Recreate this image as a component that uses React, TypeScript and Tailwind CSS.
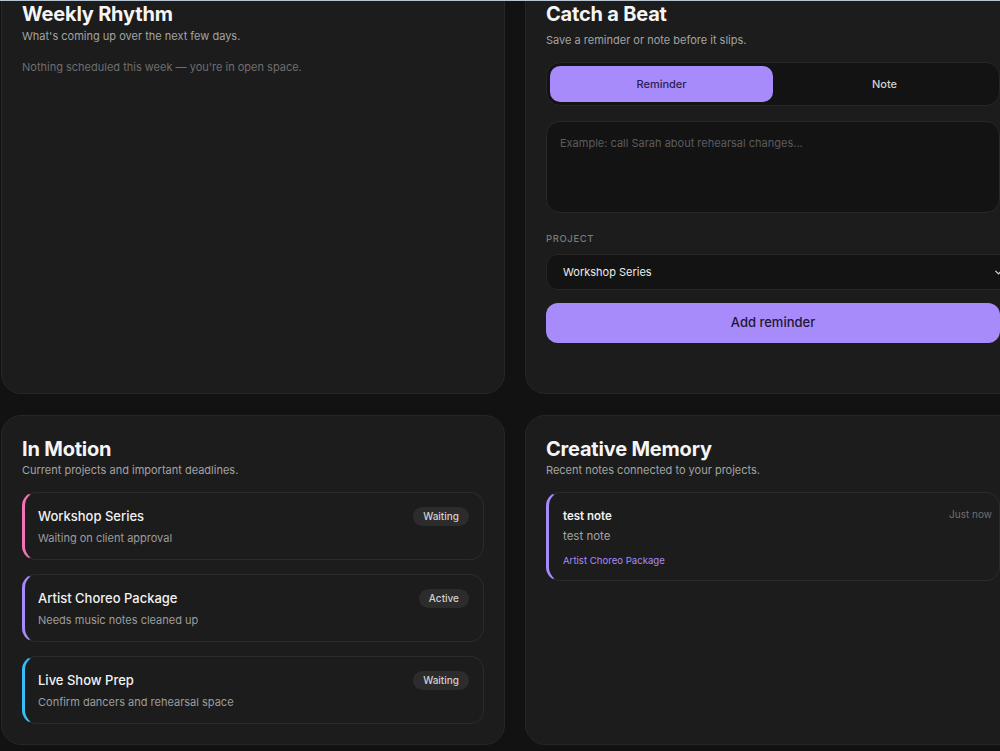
import { ChevronDown } from 'lucide-react';

interface Project {
    name: string;
    detail: string;
    status: string;
    accent: string;
}

const projects: Project[] = [
    {
        name: 'Workshop Series',
        detail: 'Waiting on client approval',
        status: 'Waiting',
        accent: 'border-l-[#f472b6]',
    },
    {
        name: 'Artist Choreo Package',
        detail: 'Needs music notes cleaned up',
        status: 'Active',
        accent: 'border-l-[#a78bfa]',
    },
    {
        name: 'Live Show Prep',
        detail: 'Confirm dancers and rehearsal space',
        status: 'Waiting',
        accent: 'border-l-[#38bdf8]',
    },
];

function Panel({ children, className = '' }: { children: React.ReactNode; className?: string }) {
    return (
        <section
            className={`rounded-[20px] border border-[#262626] bg-[#1c1c1c] px-5 pt-5 pb-5 ${className}`}
        >
            {children}
        </section>
    );
}

function PanelTitle({ title }: { title: string }) {
    return (
        <h2 className="text-[20px] leading-[26px] font-bold tracking-[-0.2px] text-[#f5f5f5]">
            {title}
        </h2>
    );
}

export default function App() {
    return (
        <div className="relative h-[751px] overflow-hidden bg-[#121212] font-['Inter',sans-serif]">
            <div className="absolute top-0 left-0 right-0 z-10 h-px bg-[#b9c4d2]" />

            <div className="-mt-[20px] ml-px grid w-[1020px] grid-cols-[504px_496px] gap-x-[20px] gap-y-[21px]">
                {/* Weekly Rhythm */}
                <Panel className="h-[414px]">
                    <PanelTitle title="Weekly Rhythm" />
                    <p className="mt-px text-[11px] leading-4 text-[#a3a3a3]">
                        What&apos;s coming up over the next few days.
                    </p>
                    <p className="mt-[15px] text-[11px] leading-4 text-[#6e6e6e]">
                        Nothing scheduled this week — you&apos;re in open space.
                    </p>
                </Panel>

                {/* Catch a Beat */}
                <Panel className="h-[414px]">
                    <PanelTitle title="Catch a Beat" />
                    <p className="mt-[5px] text-[11px] leading-4 text-[#a3a3a3]">
                        Save a reminder or note before it slips.
                    </p>

                    <div className="mt-[14px] grid grid-cols-2 rounded-[14px] border border-[#262626] bg-[#131313] p-[3px]">
                        <button className="h-9 rounded-[10px] bg-[#a78bfa] text-[11px] font-medium text-[#2b1d55]">
                            Reminder
                        </button>
                        <button className="h-9 rounded-[10px] text-[11px] font-medium text-[#d0d0d0]">
                            Note
                        </button>
                    </div>

                    <div className="mt-[15px] h-[92px] rounded-[14px] border border-[#282828] bg-[#131313] px-[13px] py-[13px]">
                        <p className="text-[11px] leading-4 text-[#5c5c5c]">
                            Example: call Sarah about rehearsal changes...
                        </p>
                    </div>

                    <div className="mt-[19px] text-[9.5px] leading-[14px] font-medium tracking-[0.6px] text-[#7a7a7a]">
                        PROJECT
                    </div>
                    <div className="relative mt-2 flex h-9 w-[calc(100%+12px)] items-center rounded-[12px] border border-[#262626] bg-[#131313] pl-[16px]">
                        <span className="text-[11px] text-[#ececec]">Workshop Series</span>
                        <ChevronDown
                            size={11}
                            strokeWidth={2.5}
                            className="absolute right-[7px] text-[#dcdcdc]"
                        />
                    </div>

                    <button className="mt-[13px] h-10 w-full rounded-[12px] bg-[#a78bfa] text-[13px] font-medium text-[#1f1636]">
                        Add reminder
                    </button>
                </Panel>

                {/* In Motion */}
                <Panel>
                    <PanelTitle title="In Motion" />
                    <p className="text-[11px] leading-4 text-[#a3a3a3]">
                        Current projects and important deadlines.
                    </p>

                    <div className="mt-[14px] flex flex-col gap-[14px]">
                        {projects.map((p) => (
                            <div
                                key={p.name}
                                className={`flex items-start justify-between rounded-[14px] border border-[#2b2b2b] border-l-[3px] bg-[#1c1c1c] pt-[13px] pr-[14px] pb-[13px] pl-[13px] ${p.accent}`}
                            >
                                <div>
                                    <div className="text-[13px] leading-5 font-medium text-[#f2f2f2]">
                                        {p.name}
                                    </div>
                                    <div className="mt-1 text-[11px] leading-4 text-[#9c9c9c]">
                                        {p.detail}
                                    </div>
                                </div>
                                <span className="mt-px rounded-full bg-[#2c2c2c] px-[10px] text-[10px] leading-[19px] font-medium text-[#d0d0d0]">
                                    {p.status}
                                </span>
                            </div>
                        ))}
                    </div>
                </Panel>

                {/* Creative Memory */}
                <Panel>
                    <PanelTitle title="Creative Memory" />
                    <p className="text-[11px] leading-4 text-[#a3a3a3]">
                        Recent notes connected to your projects.
                    </p>

                    <div className="mt-[14px] rounded-[14px] border border-[#2b2b2b] border-l-[3px] border-l-[#a78bfa] bg-[#1c1c1c] pt-[15px] pr-[7px] pb-3 pl-[14px]">
                        <div className="flex items-start justify-between">
                            <span className="text-[11.5px] leading-4 font-semibold text-[#f2f2f2]">
                                test note
                            </span>
                            <span className="text-[10px] leading-[13px] text-[#707070]">
                                Just now
                            </span>
                        </div>
                        <p className="mt-1 text-[11.5px] leading-4 text-[#a3a3a3]">test note</p>
                        <div className="mt-[10px] text-[9.6px] leading-[14px] text-[#a78bfa]">
                            Artist Choreo Package
                        </div>
                    </div>
                </Panel>
            </div>
        </div>
    );
}
